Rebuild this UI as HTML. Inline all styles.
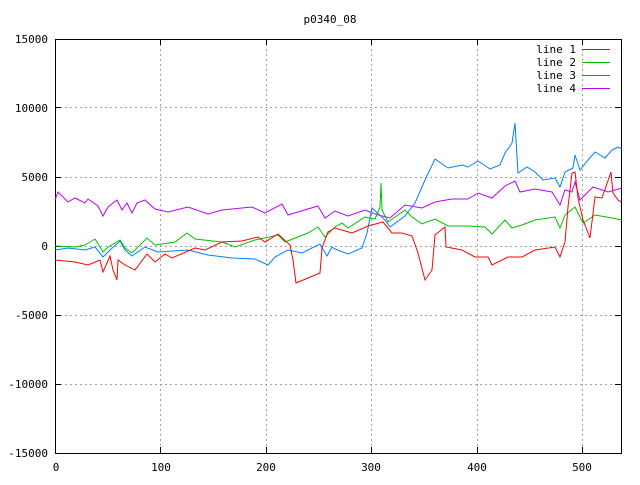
<!DOCTYPE html>
<html><head><meta charset="utf-8"><style>
html,body{margin:0;padding:0;background:#fff;}
svg text{font-family:"DejaVu Sans Mono","Liberation Mono",monospace;font-size:11px;fill:#000;}
</style></head><body>
<svg width="640" height="480" viewBox="0 0 640 480" xmlns="http://www.w3.org/2000/svg">
<rect width="640" height="480" fill="#fff"/>
<text x="330" y="23" text-anchor="middle">p0340_08</text>
<g stroke="#a0a0a0" stroke-width="1" stroke-dasharray="2,3" fill="none">
<path d="M160.5 39V453M266.5 39V453M371.5 39V453M477.5 39V453M582.5 39V453"/>
<path d="M55 107.5H621M55 177.5H621M55 246.5H621M55 315.5H621M55 384.5H621"/>
</g>
<g stroke="#000" stroke-width="1" fill="none">
<rect x="55.5" y="39.5" width="566" height="414"/>
<path d="M55 107.5h6M615 107.5h6M55 177.5h6M615 177.5h6M55 246.5h6M615 246.5h6M55 315.5h6M615 315.5h6M55 384.5h6M615 384.5h6"/>
<path d="M160.5 453v-6M160.5 39v6M266.5 453v-6M266.5 39v6M371.5 453v-6M371.5 39v6M477.5 453v-6M477.5 39v6M582.5 453v-6M582.5 39v6"/>
</g>
<g text-anchor="end">
<text x="48" y="43">15000</text><text x="48" y="112">10000</text><text x="48" y="181">5000</text>
<text x="48" y="250">0</text><text x="48" y="319">-5000</text><text x="48" y="388">-10000</text><text x="48" y="457">-15000</text>
</g>
<g text-anchor="middle">
<text x="56" y="471">0</text><text x="161" y="471">100</text><text x="266" y="471">200</text>
<text x="371" y="471">300</text><text x="477" y="471">400</text><text x="582" y="471">500</text>
</g>
<g text-anchor="end">
<text x="576" y="53">line 1</text><text x="576" y="66">line 2</text><text x="576" y="79">line 3</text><text x="576" y="92">line 4</text>
</g>
<g fill="none" stroke-width="1">
<path d="M582 49.5h28" stroke="#ff0000"/>
<path d="M582 62.5h28" stroke="#00c000"/>
<path d="M582 75.5h28" stroke="#0080ff"/>
<path d="M582 88.5h28" stroke="#c000ff"/>
</g>
<g fill="none" stroke-width="1">
<polyline stroke="#c000ff" points="55,200 58,192 68,202 75,198 85,203 88,199 98,206 103,216 108,207 117,200 122,210 127,203 132,213 137,203 145,200 155,209 168,212 188,207 208,214 222,210 252,207 265,213 282,204 288,215 318,206 325,218 335,211 348,216 365,210 375,214 390,218 405,205 422,208 435,202 452,199 468,199 478,193 492,198 505,186 515,181 520,192 535,189 552,192 560,205 565,190 572,192 575,182 580,200 593,187 608,192 622,188"/>
<polyline stroke="#0080ff" points="55,250 68,248 85,250 95,247 103,257 110,250 120,241 125,250 132,256 145,247 158,252 188,250 208,255 232,258 255,259 268,265 275,257 288,250 302,253 320,244 327,256 332,247 335,249 348,254 362,248 367,233 372,208 385,220 390,227 405,216 415,203 425,180 435,159 448,168 462,165 468,167 478,161 490,169 500,165 505,153 512,143 515,123 518,173 527,167 535,172 543,180 555,178 560,187 565,172 573,168 575,155 580,170 588,160 595,152 605,158 612,150 618,147 622,149"/>
<polyline stroke="#00c000" points="55,246 75,247 85,245 95,239 103,252 108,247 120,240 125,248 132,253 147,238 155,245 175,242 187,233 195,239 222,242 235,247 255,240 278,235 285,242 308,233 318,227 325,237 335,227 342,223 348,228 365,217 375,219 380,207 381,183 382,210 388,222 405,210 412,217 422,224 435,219 448,226 468,226 485,227 492,234 505,220 512,228 522,225 535,220 555,217 560,228 565,215 575,207 583,223 595,215 612,218 622,220"/>
<polyline stroke="#ff0000" points="55,260 75,262 88,265 100,260 103,272 110,256 113,270 117,280 118,260 125,265 135,270 147,254 155,262 165,254 172,258 195,248 205,250 222,242 242,241 258,237 265,242 278,234 290,245 293,260 296,283 308,278 320,273 322,248 328,232 335,228 352,233 368,226 383,222 392,233 402,233 412,236 418,253 425,280 432,270 435,235 445,227 446,247 462,250 475,257 488,257 492,265 508,257 522,257 535,250 555,247 560,257 565,242 568,207 572,173 575,172 578,198 583,220 590,238 595,197 602,198 611,172 613,193 618,200 621,202"/>
</g>
</svg>
</body></html>
